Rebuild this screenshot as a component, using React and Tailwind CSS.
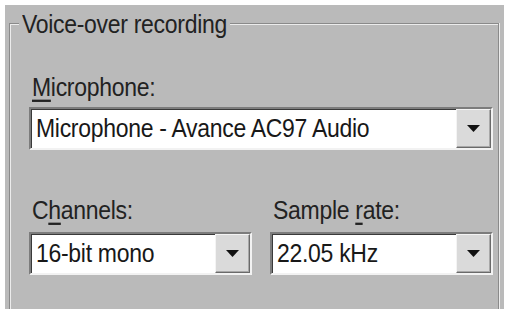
import React from 'react';

const font = { fontFamily: '"Liberation Sans", Arial, sans-serif' };

// the old dialog font is a bit taller than Arial, so stretch the glyphs a little
const Tall = ({ children }) => <span className="inline-block scale-y-[1.15]">{children}</span>;

const Combo = ({ value }) => (
  <div className="flex h-[43px] border-2 border-t-[#7c7c7c] border-l-[#7c7c7c] border-b-[#f2f2f2] border-r-[#f2f2f2] bg-white shadow-[inset_1px_1px_0_#3a3a3a]">
    <div className="flex-1 flex items-center pl-[5px] text-[23px] tracking-[-0.3px] text-[#181818] leading-none whitespace-nowrap overflow-hidden">
      <Tall>{value}</Tall>
    </div>
    <div className="w-[35px] h-full flex items-center justify-center bg-[#dadada] border border-t-[#f4f4f4] border-l-[#f4f4f4] border-b-[#6a6a6a] border-r-[#6a6a6a] shadow-[inset_-1px_-1px_0_#a8a8a8]">
      <svg width="13" height="7" viewBox="0 0 13 7">
        <path d="M0 0 H13 L6.5 7 Z" fill="#111" />
      </svg>
    </div>
  </div>
);

const Label = ({ before, key_, after }) => (
  <div className="pl-[3px] h-[28px] leading-[28px] text-[23px] tracking-[-0.3px] text-[#222] whitespace-nowrap">
    <Tall>
      {before}
      <u className="underline-offset-[3px] decoration-[1.5px]">{key_}</u>
      {after}
    </Tall>
  </div>
);

export default function App() {
  return (
    <div className="w-[509px] h-[309px] bg-white pt-[5px] pl-[5px] pr-[5px] overflow-hidden" style={font}>
      <div className="h-full bg-[#bababa] pt-[18px] pl-[4px] pr-[5px]">
        <div className="h-[300px] border border-[#8a8a8a] shadow-[inset_1px_1px_0_#ececec,1px_0_0_#ececec]">
          {/* group title sits on the top rule */}
          <div className="-mt-[14px] ml-[9px] w-fit bg-[#bababa] px-[3px] h-[28px] leading-[28px] text-[23px] tracking-[-0.3px] text-[#222]">
            <Tall>Voice-over recording</Tall>
          </div>

          <div className="pl-[19px] pr-[5px] mt-[35px]">
            <Label before="" key_="M" after="icrophone:" />
            <div className="mt-[6px]">
              <Combo value="Microphone - Avance AC97 Audio" />
            </div>

            <div className="grid grid-cols-2 gap-[18px] mt-[46px]">
              <div>
                <Label before="C" key_="h" after="annels:" />
                <div className="mt-[8px]">
                  <Combo value="16-bit mono" />
                </div>
              </div>
              <div>
                <Label before="Sample " key_="r" after="ate:" />
                <div className="mt-[8px]">
                  <Combo value="22.05 kHz" />
                </div>
              </div>
            </div>
          </div>
        </div>
      </div>
    </div>
  );
}
